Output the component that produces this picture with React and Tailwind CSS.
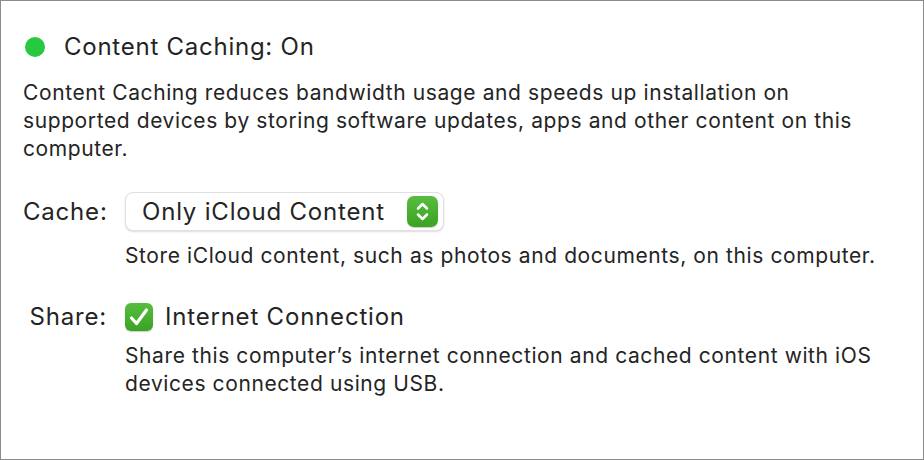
import React from 'react';

const Stepper = () => (
  <div className="w-[31px] h-[31px] rounded-[7px] bg-gradient-to-b from-[#58bd3e] to-[#3aa322] shadow-[0_0.5px_1px_rgba(0,0,0,0.2)]">
    <svg width="31" height="31" viewBox="0 0 31 31" fill="none" stroke="white" strokeWidth="2.5" strokeLinecap="round" strokeLinejoin="round">
      <path d="M11 12.5 L15.5 8 L20 12.5" />
      <path d="M11 18.5 L15.5 23 L20 18.5" />
    </svg>
  </div>
);

const Checkbox = () => (
  <div className="w-[28px] h-[28px] rounded-[6px] bg-gradient-to-b from-[#58bd3e] to-[#3aa322] shadow-[0_0.5px_1px_rgba(0,0,0,0.2)]">
    <svg width="28" height="28" viewBox="0 0 28 28" fill="none" stroke="white" strokeWidth="3.2" strokeLinecap="round" strokeLinejoin="round">
      <path d="M6.5 15 L11.5 20.5 L21.5 7" />
    </svg>
  </div>
);

export default function App() {
  return (
    <div className="w-[924px] h-[460px] bg-white border border-[#8c8c8c] text-[#242424] antialiased font-[Inter,sans-serif]">
      <div className="pl-[22px] pr-4 pt-[27px]">
        <div className="flex items-center h-[38px]">
          <div className="w-[20px] h-[20px] ml-[2px] rounded-full bg-[#28c840]" />
          <span className="ml-[19px] text-[24px] tracking-[0.75px]">Content Caching: On</span>
        </div>

        <p className="mt-[13px] text-[21px] leading-[28px] tracking-[0.6px] w-[850px]">
          Content Caching reduces bandwidth usage and speeds up installation on supported devices by storing software updates, apps and other content on this computer.
        </p>

        <div className="mt-[29px] flex">
          <div className="w-[84px] text-right text-[24px] leading-[39px] tracking-[0.8px]">Cache:</div>
          <div className="ml-[18px]">
            <div className="w-[319px] h-[39px] rounded-[8px] bg-white border border-[#e0e0e0] shadow-[0_1px_2px_rgba(0,0,0,0.14)] flex items-center justify-between pl-[16px] pr-[5px]">
              <span className="text-[24px] tracking-[0.8px]">Only iCloud Content</span>
              <Stepper />
            </div>
            <p className="mt-[11px] text-[21px] leading-[28px] tracking-[0.6px] whitespace-nowrap">
              Store iCloud content, such as photos and documents, on this computer.
            </p>
          </div>
        </div>

        <div className="mt-[31px] flex">
          <div className="w-[84px] text-right text-[24px] leading-[32px] tracking-[0.8px]">Share:</div>
          <div className="ml-[18px]">
            <div className="flex items-center h-[32px]">
              <Checkbox />
              <span className="ml-[12px] text-[24px] tracking-[0.8px]">Internet Connection</span>
            </div>
            <p className="mt-[9px] text-[21px] leading-[28px] tracking-[0.6px] w-[775px]">
              Share this computer’s internet connection and cached content with iOS devices connected using USB.
            </p>
          </div>
        </div>
      </div>
    </div>
  );
}
